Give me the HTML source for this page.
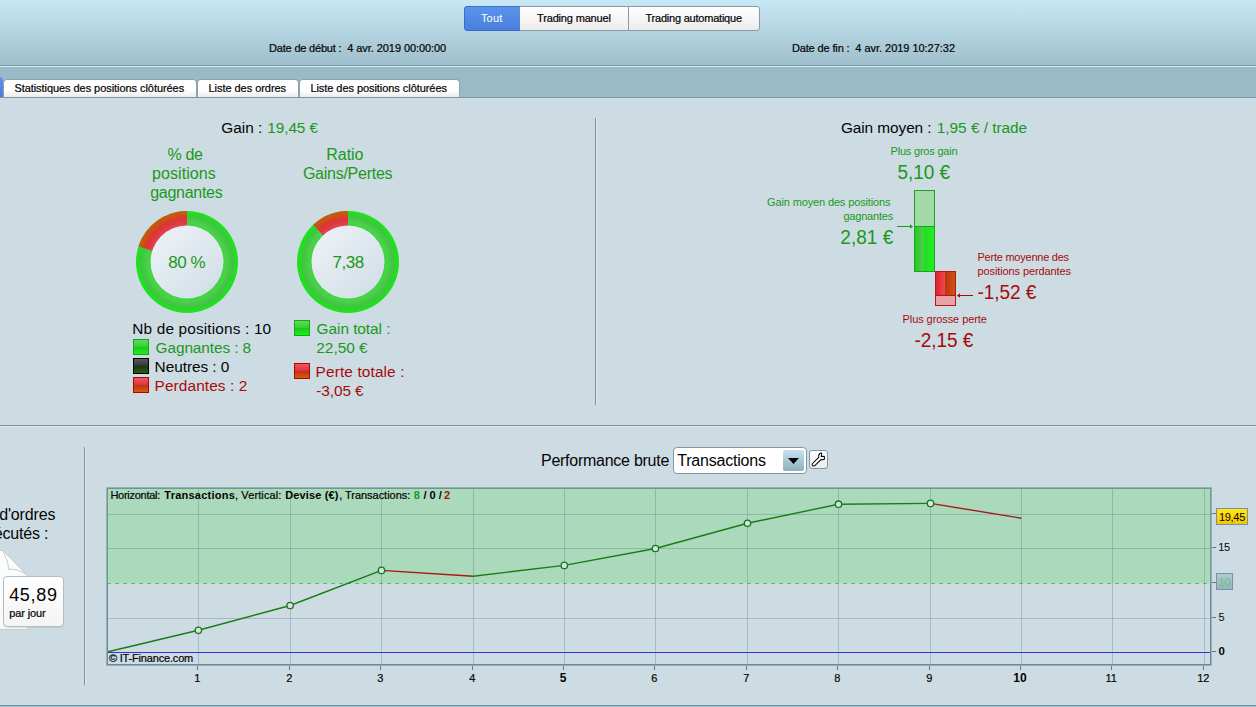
<!DOCTYPE html>
<html><head><meta charset="utf-8">
<style>
html,body{margin:0;padding:0;}
body{width:1256px;height:707px;overflow:hidden;background:#cddce3;font-family:"Liberation Sans",sans-serif;color:#050505;position:relative;}
.abs{position:absolute;white-space:nowrap;}
#hdr{left:0;top:0;width:1256px;height:65px;background:linear-gradient(#c9e8f5 0%,#b3d3e0 50%,#9fbfcc 100%);}
#hl1{left:0;top:65px;width:1256px;height:1px;background:#7f9aa6;}
#hl2{left:0;top:66px;width:1256px;height:1px;background:#d6eaf3;}
#tabrow{left:0;top:67px;width:1256px;height:30px;background:#9bbac7;}
#tl1{left:0;top:97px;width:1256px;height:1px;background:#7c98a4;}
.seg{top:6px;height:23px;border:1px solid #8a9aa2;background:linear-gradient(#ffffff,#ececec);box-sizing:content-box;}
.tab{top:79px;height:17px;border:1px solid #8fa3ad;border-bottom:none;border-radius:4px 4px 0 0;background:linear-gradient(#ffffff 60%,#ececec);}
.sq{width:14px;height:14px;border:1px solid #444;}
.sqg{background:linear-gradient(#5add5a 0%,#36cc36 50%,#12cc12 51%,#22ee22 100%);border-color:#14a514;}
.sqk{background:linear-gradient(#5a5a5a 0%,#333 50%,#1a3a0c 51%,#2a5a1a 100%);border-color:#000;}
.sqr{background:linear-gradient(#f05858 0%,#dd3344 50%,#bb3311 51%,#dd5a11 100%);border-color:#aa0505;}
#txt{left:0;top:0;}
</style></head><body>
<div class="abs" id="hdr"></div>
<div class="abs" id="hl1"></div><div class="abs" id="hl2"></div>
<div class="abs" id="tabrow"></div>
<div class="abs" id="tl1"></div>

<div class="abs seg" style="left:464px;width:55px;border-radius:3px 0 0 3px;background:linear-gradient(#5b94eb,#4a7fdb);border-color:#3a6ccb;"></div>
<div class="abs seg" style="left:520px;width:108px;border-left:none;border-right:none;"></div>
<div class="abs seg" style="left:628px;width:130px;border-radius:0 3px 3px 0;"></div>

<div class="abs" style="left:-6px;top:77px;width:9px;height:20px;border-radius:4px 4px 0 0;background:linear-gradient(#5b94eb,#4a7fdb);"></div>
<div class="abs tab" style="left:3px;width:192px;"></div>
<div class="abs tab" style="left:197px;width:100px;"></div>
<div class="abs tab" style="left:299px;width:159px;"></div>

<!-- ===== stats panel ===== -->
<div class="abs" style="left:595px;top:118px;width:1px;height:287px;background:#79909c;"></div><div class="abs" style="left:596px;top:118px;width:1px;height:287px;background:#dcebf2;"></div>

<svg class="abs" style="left:0;top:100px;" width="600" height="320" viewBox="0 100 600 320">
<defs>
<radialGradient id="gg" gradientUnits="userSpaceOnUse" cx="187" cy="262" r="51">
<stop offset="0.70" stop-color="#30d830"/><stop offset="0.73" stop-color="#3ad83a"/><stop offset="0.76" stop-color="#4ed04e"/><stop offset="0.90" stop-color="#3ec43e"/><stop offset="0.935" stop-color="#24dc24"/><stop offset="1" stop-color="#20e020"/>
</radialGradient>
<radialGradient id="rg" gradientUnits="userSpaceOnUse" cx="187" cy="262" r="51">
<stop offset="0.70" stop-color="#e24858"/><stop offset="0.80" stop-color="#de3642"/><stop offset="0.87" stop-color="#d83a2e"/><stop offset="0.925" stop-color="#cd5014"/><stop offset="1" stop-color="#c85a10"/>
</radialGradient>
<radialGradient id="gg2" gradientUnits="userSpaceOnUse" cx="348" cy="262" r="51" href="#gg"/>
<radialGradient id="rg2" gradientUnits="userSpaceOnUse" cx="348" cy="262" r="51" href="#rg"/>
<linearGradient id="ig" x1="0.15" y1="0.15" x2="0.85" y2="0.85"><stop offset="0" stop-color="#eaf0f5"/><stop offset="1" stop-color="#d4e0e8"/></linearGradient>
</defs>
<circle cx="187" cy="262" r="51" fill="url(#gg)"/>
<path d="M138.50,246.24 A51,51 0 0 1 187.00,211.00 L187.00,226.00 A36,36 0 0 0 152.76,250.88 Z" fill="url(#rg)"/>
<circle cx="187" cy="262" r="36.5" fill="url(#ig)"/>
<circle cx="348" cy="262" r="51" fill="url(#gg2)"/>
<path d="M313.22,224.70 A51,51 0 0 1 348.00,211.00 L348.00,226.00 A36,36 0 0 0 323.45,235.67 Z" fill="url(#rg2)"/>
<circle cx="348" cy="262" r="36.5" fill="url(#ig)"/>
</svg>

<div class="abs sq sqg" style="left:133px;top:339px;"></div>
<div class="abs sq sqk" style="left:133px;top:358px;"></div>
<div class="abs sq sqr" style="left:133px;top:377px;"></div>
<div class="abs sq sqg" style="left:294px;top:320px;"></div>
<div class="abs sq sqr" style="left:294px;top:363px;"></div>

<div class="abs" style="left:914px;top:190px;width:19px;height:80px;border:1px solid #1fa01f;background:#a3d9a6;"></div>
<div class="abs" style="left:914px;top:226px;width:19px;height:44px;border:1px solid #1fa01f;background:linear-gradient(90deg,#22cc22 0%,#50cc50 46%,#22dd22 47%,#22ee22 100%);"></div>
<div class="abs" style="left:935px;top:271px;width:19px;height:33px;border:1px solid #b01818;background:#e9a3a6;"></div>
<div class="abs" style="left:935px;top:271px;width:19px;height:23px;border:1px solid #b01818;background:linear-gradient(90deg,#dd2233 0%,#ee4848 46%,#bb3311 47%,#cc5511 100%);"></div>
<svg class="abs" style="left:890px;top:215px;" width="90" height="90" viewBox="890 215 90 90">
<path d="M897,226.5 H911" stroke="#1a981c" fill="none" stroke-width="1"/><path d="M913,226.5 L910,224.2 V228.8 Z" fill="#1a981c"/>
<path d="M973,295.5 H959" stroke="#a60a0a" fill="none" stroke-width="1"/><path d="M957,295.5 L960,293.2 V297.8 Z" fill="#a60a0a"/>
</svg>

<!-- ===== bottom section ===== -->
<div class="abs" style="left:0;top:425px;width:1256px;height:1px;background:#7f97a2;"></div>
<div class="abs" style="left:0;top:426px;width:1256px;height:1px;background:#dcebf2;"></div>
<div class="abs" style="left:84px;top:447px;width:1px;height:238px;background:#79909c;"></div><div class="abs" style="left:85px;top:447px;width:1px;height:238px;background:#dcebf2;"></div>
<div class="abs" style="left:0;top:705px;width:1256px;height:1px;background:#7a94a0;"></div>
<div class="abs" style="left:0;top:706px;width:1256px;height:1px;background:#9ebbc8;"></div>

<svg class="abs" style="left:0;top:545px;" width="70" height="90" viewBox="0 545 70 90">
<defs><linearGradient id="pg" x1="0" y1="0" x2="1" y2="1"><stop offset="0" stop-color="#ffffff"/><stop offset="1" stop-color="#f3f5f6"/></linearGradient></defs>
<path d="M-5,550.5 H3 L27.5,575.5 V629.5 H-5 Z" fill="url(#pg)" stroke="#c3cdd3" stroke-width="1"/>
<path d="M3,550.5 C6,558 9,565 8.5,569.5 C15,568.5 22,571 27.5,575.5 Z" fill="#fbfcfd" stroke="#c3cdd3" stroke-width="1"/>
</svg>
<div class="abs" style="left:3px;top:576px;width:59px;height:49px;border:1px solid #b4bcc2;border-radius:4px;background:linear-gradient(#ffffff,#f4f4f4);box-shadow:0 1px 1px rgba(0,0,0,0.08);"></div>

<div class="abs" style="left:673px;top:447px;width:132px;height:25px;border:1px solid #7f97a2;border-radius:4px;background:#fff;"></div>
<div class="abs" style="left:783px;top:450px;width:21px;height:21px;border-radius:2px;background:linear-gradient(#c4e1ee,#8fb0be);"></div>
<svg class="abs" style="left:783px;top:450px;" width="21" height="21"><path d="M5,8 H16 L10.5,14 Z" fill="#000"/></svg>
<div class="abs" style="left:809px;top:450px;width:17px;height:17px;border:1px solid #7f97a2;border-radius:3px;background:linear-gradient(#ffffff,#ececec);"></div>
<svg class="abs" style="left:809px;top:450px;" width="19" height="19" viewBox="0 0 19 19"><path d="M3.6,13.5 L9.7,7.4 C9.4,5.8 9.9,4.3 10.8,3.5 L12.7,3.1 L12.3,6.6 L15.3,6.2 L15.5,9.0 C14.4,9.7 13,9.9 11.9,9.6 L5.8,15.6 A1.5,1.5 0 0 1 3.6,13.5 Z" fill="#fff" stroke="#000" stroke-width="1.05" stroke-linejoin="round"/></svg>

<svg class="abs" style="left:100px;top:480px;" width="1156" height="215" viewBox="100 480 1156 215">
<defs><linearGradient id="yl" x1="0" y1="0" x2="0" y2="1"><stop offset="0" stop-color="#ffe818"/><stop offset="1" stop-color="#f5c400"/></linearGradient>
<linearGradient id="bl" x1="0" y1="0" x2="0" y2="1"><stop offset="0" stop-color="#b2cad6"/><stop offset="1" stop-color="#98b2be"/></linearGradient></defs>
<rect x="108" y="489" width="1102" height="94" fill="#abd9bb"/>
<g stroke="rgba(70,100,105,0.27)" stroke-width="1" fill="none"><path d="M198.5,489 V664"/><path d="M290.5,489 V664"/><path d="M381.5,489 V664"/><path d="M473.5,489 V664"/><path d="M564.5,489 V664"/><path d="M655.5,489 V664"/><path d="M747.5,489 V664"/><path d="M838.5,489 V664"/><path d="M930.5,489 V664"/><path d="M1021.5,489 V664"/><path d="M1112.5,489 V664"/><path d="M1204.5,489 V664"/><path d="M108,514.5 H1210"/><path d="M108,548.5 H1210"/><path d="M108,618.5 H1210"/></g>
<path d="M107,583.5 H1210" stroke="#3fcc4f" stroke-width="1" stroke-dasharray="4,4" fill="none"/>
<path d="M108,652.5 H1210" stroke="#3030dd" stroke-width="1" fill="none"/>
<g stroke-width="1.4" fill="none"><path d="M107,652 L198.4,630.3" stroke="#177d17"/><path d="M198.4,630.3 L290.1,605.5" stroke="#177d17"/><path d="M290.1,605.5 L381.5,570.4" stroke="#177d17"/><path d="M381.5,570.4 L473.2,576.2" stroke="#a51818"/><path d="M473.2,576.2 L564.3,565.4" stroke="#177d17"/><path d="M564.3,565.4 L655.4,548.5" stroke="#177d17"/><path d="M655.4,548.5 L747.5,523.3" stroke="#177d17"/><path d="M747.5,523.3 L838.5,504.2" stroke="#177d17"/><path d="M838.5,504.2 L930.5,503.4" stroke="#177d17"/><path d="M930.5,503.4 L1021.3,518.2" stroke="#a51818"/></g>
<g stroke="#157a15" stroke-width="1.3" fill="#d4e1e6"><circle cx="198.4" cy="630.3" r="3.2"/><circle cx="290.1" cy="605.5" r="3.2"/><circle cx="381.5" cy="570.4" r="3.2"/><circle cx="564.3" cy="565.4" r="3.2"/><circle cx="655.4" cy="548.5" r="3.2"/><circle cx="747.5" cy="523.3" r="3.2"/><circle cx="838.5" cy="504.2" r="3.2"/><circle cx="930.5" cy="503.4" r="3.2"/></g>
<rect x="106.5" y="487.5" width="1105" height="178" fill="none" stroke="#94b0be" stroke-width="1"/>
<rect x="107.5" y="488.5" width="1103" height="176" fill="none" stroke="#6e8a96" stroke-width="1"/>
<path d="M107.5,583 V488.5 H1210.5 V583" fill="none" stroke="#6c9c88" stroke-width="1"/>
<g stroke="#66767f" stroke-width="1" fill="none"><path d="M197.5,666 V670"/><path d="M289.5,666 V670"/><path d="M380.5,666 V670"/><path d="M472.5,666 V670"/><path d="M563.5,666 V670"/><path d="M654.5,666 V670"/><path d="M746.5,666 V670"/><path d="M837.5,666 V670"/><path d="M929.5,666 V670"/><path d="M1020.5,666 V670"/><path d="M1111.5,666 V670"/><path d="M1203.5,666 V670"/><path d="M1212,513.5 H1216 M1212,547.5 H1216 M1212,582.5 H1216 M1212,617.5 H1216 M1212,651.5 H1216"/></g>
<rect x="1216.5" y="508.500" width="31" height="16" fill="url(#yl)" stroke="#7a8fa0"/>
<rect x="1216.5" y="573.5" width="16" height="16" fill="url(#bl)" stroke="#7a929e"/>
</svg>

<svg class="abs" id="txt" width="1256" height="707" viewBox="0 0 1256 707" font-family="Liberation Sans, sans-serif">
<text x="480.90" y="22" font-size="11" letter-spacing="0.222" fill="#fff">Tout</text>
<text x="537.10" y="22" font-size="11" letter-spacing="-0.175" stroke="#050505" stroke-width="0.22" fill="#050505">Trading manuel</text>
<text x="645.50" y="22" font-size="11" letter-spacing="-0.221" stroke="#050505" stroke-width="0.22" fill="#050505">Trading automatique</text>
<text x="269.10" y="52" font-size="11" letter-spacing="-0.198" stroke="#050505" stroke-width="0.22" fill="#050505">Date de début :</text>
<text x="347.30" y="52" font-size="11" letter-spacing="-0.073" stroke="#050505" stroke-width="0.22" fill="#050505">4 avr. 2019 00:00:00</text>
<text x="791.90" y="52" font-size="11" letter-spacing="-0.130" stroke="#050505" stroke-width="0.22" fill="#050505">Date de fin :</text>
<text x="855.30" y="52" font-size="11" letter-spacing="-0.031" stroke="#050505" stroke-width="0.22" fill="#050505">4 avr. 2019 10:27:32</text>
<text x="14.40" y="92" font-size="11" letter-spacing="-0.058" stroke="#050505" stroke-width="0.22" fill="#050505">Statistiques des positions clôturées</text>
<text x="208.50" y="92" font-size="11" letter-spacing="-0.044" stroke="#050505" stroke-width="0.22" fill="#050505">Liste des ordres</text>
<text x="310.40" y="92" font-size="11" letter-spacing="-0.057" stroke="#050505" stroke-width="0.22" fill="#050505">Liste des positions clôturées</text>
<text x="221.30" y="133" font-size="15.4" fill="#050505">Gain :</text>
<text x="267.30" y="133" font-size="15.4" letter-spacing="-0.098" fill="#1a981c">19,45 €</text>
<text x="167.50" y="160" font-size="16" letter-spacing="-0.390" fill="#1a981c">% de</text>
<text x="152.10" y="179" font-size="16" letter-spacing="0.056" fill="#1a981c">positions</text>
<text x="150.20" y="198" font-size="16" letter-spacing="-0.279" fill="#1a981c">gagnantes</text>
<text x="326.30" y="160" font-size="16" letter-spacing="-0.038" fill="#1a981c">Ratio</text>
<text x="302.90" y="179" font-size="16" letter-spacing="-0.253" fill="#1a981c">Gains/Pertes</text>
<text x="168.33" y="268" font-size="17" letter-spacing="-0.464" fill="#1a981c">80 %</text>
<text x="332.43" y="268" font-size="17" letter-spacing="-0.464" fill="#1a981c">7,38</text>
<text x="132.30" y="334" font-size="15.4" letter-spacing="0.149" fill="#050505">Nb de positions : 10</text>
<text x="155.60" y="353" font-size="15.4" letter-spacing="-0.102" fill="#1a981c">Gagnantes : 8</text>
<text x="154.60" y="372" font-size="15.4" letter-spacing="-0.052" fill="#050505">Neutres : 0</text>
<text x="154.60" y="391" font-size="15.4" letter-spacing="0.093" fill="#a60a0a">Perdantes : 2</text>
<text x="316.60" y="334" font-size="15.4" letter-spacing="-0.050" fill="#1a981c">Gain total :</text>
<text x="316.30" y="353" font-size="15.4" fill="#1a981c">22,50 €</text>
<text x="315.60" y="377" font-size="15.4" letter-spacing="0.124" fill="#a60a0a">Perte totale :</text>
<text x="316.30" y="396" font-size="15.4" letter-spacing="-0.109" fill="#a60a0a">-3,05 €</text>
<text x="840.90" y="133" font-size="15.4" letter-spacing="-0.078" fill="#050505">Gain moyen :</text>
<text x="936.80" y="133" font-size="15.4" letter-spacing="-0.026" fill="#1a981c">1,95 € / trade</text>
<text x="890.50" y="155" font-size="11" letter-spacing="-0.199" fill="#1a981c">Plus gros gain</text>
<text transform="translate(897.60,179) scale(1,1.07)" font-size="19" letter-spacing="-0.072" fill="#1a981c">5,10 €</text>
<text x="767.00" y="206" font-size="11" letter-spacing="-0.133" fill="#1a981c">Gain moyen des positions</text>
<text x="843.40" y="220" font-size="11" letter-spacing="-0.185" fill="#1a981c">gagnantes</text>
<text transform="translate(840.30,244) scale(1,1.07)" font-size="19" letter-spacing="0.048" fill="#1a981c">2,81 €</text>
<text x="977.50" y="261" font-size="11" letter-spacing="-0.237" fill="#a60a0a">Perte moyenne des</text>
<text x="977.50" y="275" font-size="11" letter-spacing="-0.100" fill="#a60a0a">positions perdantes</text>
<text transform="translate(977.50,299) scale(1,1.07)" font-size="19" letter-spacing="-0.064" fill="#a60a0a">-1,52 €</text>
<text x="902.50" y="323" font-size="11" letter-spacing="-0.074" fill="#a60a0a">Plus grosse perte</text>
<text transform="translate(914.50,347) scale(1,1.07)" font-size="19" letter-spacing="-0.064" fill="#a60a0a">-2,15 €</text>
<text x="-0.78" y="520" font-size="16" letter-spacing="-0.160" fill="#050505">d'ordres</text>
<text x="-6.37" y="539" font-size="16" letter-spacing="-0.160" fill="#050505">écutés :</text>
<text x="9.20" y="601" font-size="18" letter-spacing="0.667" fill="#050505">45,89</text>
<text x="9.30" y="617" font-size="11" letter-spacing="-0.133" stroke="#050505" stroke-width="0.22" fill="#050505">par jour</text>
<text x="541.00" y="466" font-size="16" letter-spacing="-0.263" fill="#050505">Performance brute</text>
<text x="677.30" y="466" font-size="16" letter-spacing="-0.218" fill="#050505">Transactions</text>
<text x="110.40" y="499" font-size="11" letter-spacing="-0.272" stroke="#050505" stroke-width="0.22" fill="#050505">Horizontal:</text>
<text x="164.30" y="499" font-size="11" font-weight="bold" letter-spacing="0.242" fill="#050505">Transactions</text>
<text x="235.00" y="499" font-size="11" letter-spacing="0.112" stroke="#050505" stroke-width="0.22" fill="#050505">, Vertical:</text>
<text x="285.30" y="499" font-size="11" font-weight="bold" letter-spacing="0.132" fill="#050505">Devise (€)</text>
<text x="339.20" y="499" font-size="11" letter-spacing="-0.034" stroke="#050505" stroke-width="0.22" fill="#050505">, Transactions:</text>
<text x="413.75" y="499" font-size="11" font-weight="bold" fill="#1a9a1a">8</text>
<text x="423.60" y="499" font-size="11" font-weight="bold" fill="#050505">/</text>
<text x="429.50" y="499" font-size="11" font-weight="bold" fill="#050505">0</text>
<text x="438.70" y="499" font-size="11" font-weight="bold" fill="#050505">/</text>
<text x="444.10" y="499" font-size="11" font-weight="bold" fill="#aa1111">2</text>
<text x="108.90" y="662" font-size="11" letter-spacing="-0.173" stroke="#050505" stroke-width="0.22" fill="#050505">© IT-Finance.com</text>
<text x="1218.90" y="521" font-size="11" letter-spacing="-0.277" fill="#050505">19,45</text>
<text x="1218.24" y="551" font-size="11" letter-spacing="-0.300" fill="#050505">15</text>
<text x="1218.44" y="586" font-size="11" letter-spacing="-0.300" fill="#5acc6a">10</text>
<text x="1218.40" y="621" font-size="11" fill="#050505">5</text>
<text x="1218.60" y="655" font-size="11.5" font-weight="bold" fill="#050505">0</text>
<text x="194.34" y="682" font-size="11" stroke="#050505" stroke-width="0.2" fill="#050505">1</text>
<text x="286.20" y="682" font-size="11" stroke="#050505" stroke-width="0.2" fill="#050505">2</text>
<text x="377.20" y="682" font-size="11" stroke="#050505" stroke-width="0.2" fill="#050505">3</text>
<text x="469.20" y="682" font-size="11" stroke="#050505" stroke-width="0.2" fill="#050505">4</text>
<text x="559.70" y="682" font-size="12" font-weight="bold" fill="#050505">5</text>
<text x="651.20" y="682" font-size="11" stroke="#050505" stroke-width="0.2" fill="#050505">6</text>
<text x="743.20" y="682" font-size="11" stroke="#050505" stroke-width="0.2" fill="#050505">7</text>
<text x="834.20" y="682" font-size="11" stroke="#050505" stroke-width="0.2" fill="#050505">8</text>
<text x="926.20" y="682" font-size="11" stroke="#050505" stroke-width="0.2" fill="#050505">9</text>
<text x="1013.36" y="682" font-size="12" font-weight="bold" fill="#050505">10</text>
<text x="1105.55" y="682" font-size="11" stroke="#050505" stroke-width="0.2" fill="#050505">11</text>
<text x="1197.14" y="682" font-size="11" stroke="#050505" stroke-width="0.2" fill="#050505">12</text>
</svg>
</body></html>
